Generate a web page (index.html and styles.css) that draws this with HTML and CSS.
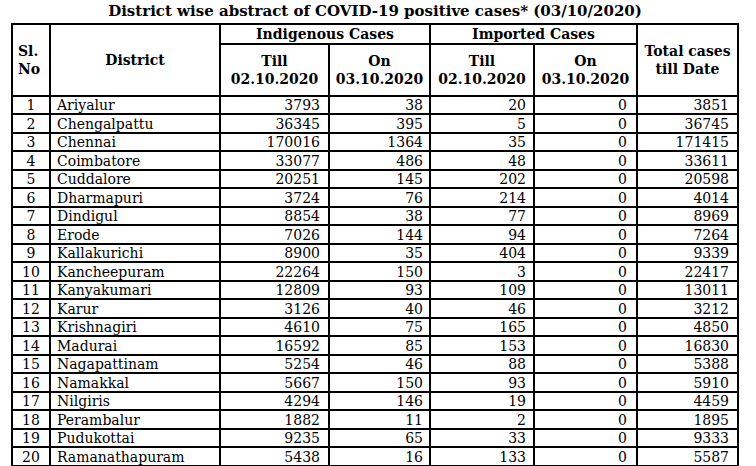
FILE: index.html
```html
<!DOCTYPE html>
<html lang="en">
<head>
<meta charset="utf-8">
<title>District wise abstract of COVID-19 positive cases</title>
<link rel="stylesheet" href="styles.css">
</head>
<body>
<div class="page">
<table class="abstract">
<caption class="title">District wise abstract of COVID-19 positive cases* (03/10/2020)</caption>
<colgroup>
<col class="c-sl"><col class="c-dist"><col class="c-till1"><col class="c-on1"><col class="c-till2"><col class="c-on2"><col class="c-total">
</colgroup>
<thead>
<tr class="h1">
<th rowspan="2" class="sl-head">Sl.<br>No</th>
<th rowspan="2">District</th>
<th colspan="2">Indigenous Cases</th>
<th colspan="2">Imported Cases</th>
<th rowspan="2">Total cases<br>till Date</th>
</tr>
<tr class="h2">
<th>Till<br>02.10.2020</th>
<th>On<br>03.10.2020</th>
<th>Till<br>02.10.2020</th>
<th>On<br>03.10.2020</th>
</tr>
</thead>
<tbody>
<tr><td>1</td><td>Ariyalur</td><td>3793</td><td>38</td><td>20</td><td>0</td><td>3851</td></tr>
<tr><td>2</td><td>Chengalpattu</td><td>36345</td><td>395</td><td>5</td><td>0</td><td>36745</td></tr>
<tr><td>3</td><td>Chennai</td><td>170016</td><td>1364</td><td>35</td><td>0</td><td>171415</td></tr>
<tr><td>4</td><td>Coimbatore</td><td>33077</td><td>486</td><td>48</td><td>0</td><td>33611</td></tr>
<tr><td>5</td><td>Cuddalore</td><td>20251</td><td>145</td><td>202</td><td>0</td><td>20598</td></tr>
<tr><td>6</td><td>Dharmapuri</td><td>3724</td><td>76</td><td>214</td><td>0</td><td>4014</td></tr>
<tr><td>7</td><td>Dindigul</td><td>8854</td><td>38</td><td>77</td><td>0</td><td>8969</td></tr>
<tr><td>8</td><td>Erode</td><td>7026</td><td>144</td><td>94</td><td>0</td><td>7264</td></tr>
<tr><td>9</td><td>Kallakurichi</td><td>8900</td><td>35</td><td>404</td><td>0</td><td>9339</td></tr>
<tr><td>10</td><td>Kancheepuram</td><td>22264</td><td>150</td><td>3</td><td>0</td><td>22417</td></tr>
<tr><td>11</td><td>Kanyakumari</td><td>12809</td><td>93</td><td>109</td><td>0</td><td>13011</td></tr>
<tr><td>12</td><td>Karur</td><td>3126</td><td>40</td><td>46</td><td>0</td><td>3212</td></tr>
<tr><td>13</td><td>Krishnagiri</td><td>4610</td><td>75</td><td>165</td><td>0</td><td>4850</td></tr>
<tr><td>14</td><td>Madurai</td><td>16592</td><td>85</td><td>153</td><td>0</td><td>16830</td></tr>
<tr><td>15</td><td>Nagapattinam</td><td>5254</td><td>46</td><td>88</td><td>0</td><td>5388</td></tr>
<tr><td>16</td><td>Namakkal</td><td>5667</td><td>150</td><td>93</td><td>0</td><td>5910</td></tr>
<tr><td>17</td><td>Nilgiris</td><td>4294</td><td>146</td><td>19</td><td>0</td><td>4459</td></tr>
<tr><td>18</td><td>Perambalur</td><td>1882</td><td>11</td><td>2</td><td>0</td><td>1895</td></tr>
<tr><td>19</td><td>Pudukottai</td><td>9235</td><td>65</td><td>33</td><td>0</td><td>9333</td></tr>
<tr><td>20</td><td>Ramanathapuram</td><td>5438</td><td>16</td><td>133</td><td>0</td><td>5587</td></tr>
</tbody>
</table>
</div>
</body>
</html>
```
FILE: styles.css
```css
html, body {
  margin: 0;
  padding: 0;
  background: #fff;
  color: #000;
  font-family: "DejaVu Serif", "Liberation Serif", serif;
}
.page {
  padding: 0 0 0 11px;
}
.abstract {
  width: 728px;
  table-layout: fixed;
  border-collapse: separate;
  border-spacing: 0;
  border-right: 2px solid #000;
  border-bottom: 2px solid #000;
  font-size: 14px;
}
.title {
  caption-side: top;
  height: 23px;
  font-size: 15px;
  font-weight: bold;
  line-height: 23px;
  text-align: center;
  white-space: nowrap;
}
.c-sl { width: 38px; }
.c-dist { width: 170px; }
.c-till1 { width: 109px; }
.c-on1 { width: 101px; }
.c-till2 { width: 104px; }
.c-on2 { width: 103px; }
.c-total { width: 101px; }

.abstract th,
.abstract td {
  border-left: 2px solid #000;
  border-top: 2px solid #000;
  padding: 0;
  vertical-align: middle;
  white-space: nowrap;
  overflow: hidden;
}
.abstract th {
  font-weight: bold;
  text-align: center;
  line-height: 18px;
}
.abstract th.sl-head {
  text-align: left;
  padding-left: 5px;
}
.h1 { height: 18px; }
.h2 { height: 52px; }

.abstract td {
  line-height: 16px;
  text-align: right;
}
.abstract tbody tr:nth-child(odd) { height: 18px; }
.abstract tbody tr:nth-child(even) { height: 19px; }
.abstract td:nth-child(1) { text-align: center; }
.abstract td:nth-child(2) { text-align: left; padding-left: 6px; }
.abstract td:nth-child(3) { padding-right: 8px; }
.abstract td:nth-child(4) { padding-right: 6px; }
.abstract td:nth-child(5) { padding-right: 7px; }
.abstract td:nth-child(6) { padding-right: 9px; }
.abstract td:nth-child(7) { padding-right: 8px; }
```
